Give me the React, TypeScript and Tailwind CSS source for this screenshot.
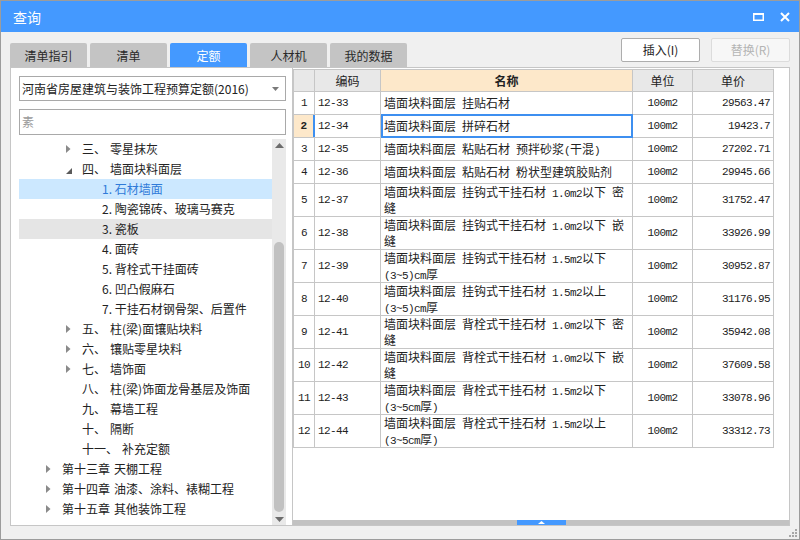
import React from 'react';

type TreeRow = {
  level: 1 | 2 | 3;
  prefix?: string;
  label: string;
  arrow?: 'closed' | 'open';
  state?: 'selected' | 'hover';
};

const treeRows: TreeRow[] = [
  { level: 2, prefix: '三、', label: '零星抹灰', arrow: 'closed' },
  { level: 2, prefix: '四、', label: '墙面块料面层', arrow: 'open' },
  { level: 3, label: '1. 石材墙面', state: 'selected' },
  { level: 3, label: '2. 陶瓷锦砖、玻璃马赛克' },
  { level: 3, label: '3. 瓷板', state: 'hover' },
  { level: 3, label: '4. 面砖' },
  { level: 3, label: '5. 背栓式干挂面砖' },
  { level: 3, label: '6. 凹凸假麻石' },
  { level: 3, label: '7. 干挂石材钢骨架、后置件' },
  { level: 2, prefix: '五、', label: '柱(梁)面镶贴块料', arrow: 'closed' },
  { level: 2, prefix: '六、', label: '镶贴零星块料', arrow: 'closed' },
  { level: 2, prefix: '七、', label: '墙饰面', arrow: 'closed' },
  { level: 2, prefix: '八、', label: '柱(梁)饰面龙骨基层及饰面' },
  { level: 2, prefix: '九、', label: '幕墙工程' },
  { level: 2, prefix: '十、', label: '隔断' },
  { level: 2, prefix: '十一、', label: '补充定额' },
  { level: 1, prefix: '第十三章', label: '天棚工程', arrow: 'closed' },
  { level: 1, prefix: '第十四章', label: '油漆、涂料、裱糊工程', arrow: 'closed' },
  { level: 1, prefix: '第十五章', label: '其他装饰工程', arrow: 'closed' },
];

interface QuotaRow {
  no: number;
  code: string;
  name: string[];
  unit: string;
  price: string;
}

const quotaRows: QuotaRow[] = [
  { no: 1, code: '12-33', name: ['墙面块料面层 挂贴石材'], unit: '100m2', price: '29563.47' },
  { no: 2, code: '12-34', name: ['墙面块料面层 拼碎石材'], unit: '100m2', price: '19423.7' },
  { no: 3, code: '12-35', name: ['墙面块料面层 粘贴石材 预拌砂浆(干混)'], unit: '100m2', price: '27202.71' },
  { no: 4, code: '12-36', name: ['墙面块料面层 粘贴石材 粉状型建筑胶贴剂'], unit: '100m2', price: '29945.66' },
  { no: 5, code: '12-37', name: ['墙面块料面层 挂钩式干挂石材 1.0m2以下 密', '缝'], unit: '100m2', price: '31752.47' },
  { no: 6, code: '12-38', name: ['墙面块料面层 挂钩式干挂石材 1.0m2以下 嵌', '缝'], unit: '100m2', price: '33926.99' },
  { no: 7, code: '12-39', name: ['墙面块料面层 挂钩式干挂石材 1.5m2以下', '(3~5)cm厚'], unit: '100m2', price: '30952.87' },
  { no: 8, code: '12-40', name: ['墙面块料面层 挂钩式干挂石材 1.5m2以上', '(3~5)cm厚'], unit: '100m2', price: '31176.95' },
  { no: 9, code: '12-41', name: ['墙面块料面层 背栓式干挂石材 1.0m2以下 密', '缝'], unit: '100m2', price: '35942.08' },
  { no: 10, code: '12-42', name: ['墙面块料面层 背栓式干挂石材 1.0m2以下 嵌', '缝'], unit: '100m2', price: '37609.58' },
  { no: 11, code: '12-43', name: ['墙面块料面层 背栓式干挂石材 1.5m2以下', '(3~5cm厚)'], unit: '100m2', price: '33078.96' },
  { no: 12, code: '12-44', name: ['墙面块料面层 背栓式干挂石材 1.5m2以上', '(3~5cm厚)'], unit: '100m2', price: '33312.73' },
];

const tabs = ['清单指引', '清单', '定额', '人材机', '我的数据'];

// ascii runs get a narrow mono face so they sit at half the width of the CJK glyphs
function Mixed({ text }: { text: string }) {
  const parts = text.split(/([\x20-\x7e]+)/).filter((p) => p !== '');
  return (
    <>
      {parts.map((p, i) =>
        /^[\x20-\x7e]+$/.test(p) ? (
          <span key={i} className="font-[family-name:'Liberation_Mono',monospace] text-[11px] tracking-[-0.6px] leading-[16px]">
            {p}
          </span>
        ) : (
          <span key={i} className="leading-[16px]">{p}</span>
        )
      )}
    </>
  );
}

function Arrow({ kind }: { kind?: 'closed' | 'open' }) {
  if (kind === 'closed') {
    return (
      <svg width="5" height="8" viewBox="0 0 5 8">
        <path d="M0 0 L4.5 4 L0 8 Z" fill="#8a8a8a" />
      </svg>
    );
  }
  if (kind === 'open') {
    return (
      <svg width="6" height="6" viewBox="0 0 6 6" className="mt-[3px]">
        <path d="M6 0 L6 6 L0 6 Z" fill="#5a5a5a" />
      </svg>
    );
  }
  return null;
}

function TreeItem({ row }: { row: TreeRow }) {
  const pad = row.level === 1 ? 'pl-[27px]' : row.level === 2 ? 'pl-[47px]' : 'pl-[83px]';
  const bg =
    row.state === 'selected' ? 'bg-[#cce8ff] text-[#2f7bd9]' : row.state === 'hover' ? 'bg-[#e5e5e5] text-[#222]' : 'text-[#222]';
  return (
    <div className={`h-[20px] flex items-center whitespace-nowrap leading-[20px] ${pad} ${bg}`}>
      {row.level !== 3 && (
        <div className="w-[16px] h-[20px] flex items-center">
          <Arrow kind={row.arrow} />
        </div>
      )}
      {row.prefix && <span>{row.prefix}</span>}
      <span className={row.prefix ? 'ml-[4px]' : ''}>{row.label}</span>
    </div>
  );
}

const cellBase = 'border-r border-r-[#c6c6c6] flex items-center whitespace-pre';
const numCell = "font-[family-name:'Liberation_Mono',monospace] text-[11px] tracking-[-0.6px]";

export default function App() {
  return (
    <div className="w-[800px] h-[540px] overflow-hidden bg-[#f0f0f0] border border-[#9c9c9c] flex flex-col font-[family-name:'Noto_Sans_CJK_SC','Noto_Sans',sans-serif] text-[12px] text-[#222]">
      {/* title bar */}
      <div className="h-[31px] bg-[#4499ff] flex items-center justify-between pl-[12px] pr-[9px] shrink-0">
        <span className="text-white text-[14px] leading-none">查询</span>
        <div className="flex items-center gap-[16px]">
          <svg width="11" height="8" viewBox="0 0 11 8">
            <rect x="0.75" y="1" width="9.5" height="6.25" fill="none" stroke="#fff" strokeWidth="1.5" />
            <rect x="0" y="0" width="11" height="2" fill="#fff" />
          </svg>
          <svg width="10" height="10" viewBox="0 0 10 10">
            <path d="M1 1 L9 9 M9 1 L1 9" stroke="#fff" strokeWidth="2" />
          </svg>
        </div>
      </div>

      {/* tabs + buttons */}
      <div className="h-[35px] flex items-start justify-between pl-[9px] pr-[9px] shrink-0">
        <div className="flex gap-[3px] mt-[11px]">
          {tabs.map((t) => (
            <div
              key={t}
              className={`w-[77px] h-[25px] rounded-t-[2px] flex items-center justify-center leading-none ${
                t === '定额' ? 'bg-[#4499ff] text-white' : 'bg-[#c4c4c4] text-[#2a2a2a]'
              }`}
            >
              {t}
            </div>
          ))}
        </div>
        <div className="flex gap-[11px] mt-[6px]">
          <div className="w-[79px] h-[24px] border border-[#adadad] bg-white rounded-[2px] flex items-center justify-center text-[#222]">
            插入(I)
          </div>
          <div className="w-[79px] h-[24px] border border-[#dcdcdc] bg-[#f7f7f7] rounded-[2px] flex items-center justify-center text-[#b4b4b4]">
            替换(R)
          </div>
        </div>
      </div>

      {/* main */}
      <div className="ml-[9px] w-[780px] h-[459px] border border-[#c6c6c6] flex shrink-0">
        {/* left panel */}
        <div className="w-[281px] bg-white flex flex-col pl-[8px] pt-[8px]">
          <div className="w-[267px] h-[25px] border border-[#a9a9a9] flex items-center justify-between pl-[2px] pr-[6px]">
            <span className="whitespace-nowrap">河南省房屋建筑与装饰工程预算定额(2016)</span>
            <svg width="7" height="4" viewBox="0 0 7 4">
              <path d="M0 0 L7 0 L3.5 4 Z" fill="#7a7a7a" />
            </svg>
          </div>
          <div className="w-[267px] h-[26px] border border-[#a9a9a9] mt-[8px] flex items-center pl-[2px] text-[#9a9a9a]">
            素
          </div>
          <div className="w-[267px] flex-1 mt-[4px] flex overflow-hidden">
            <div className="flex-1 overflow-hidden">
              {treeRows.map((r, i) => (
                <TreeItem key={i} row={r} />
              ))}
            </div>
            <div className="w-[14px] bg-[#e9e9e9] flex flex-col">
              <div className="h-[12px] flex items-center justify-center">
                <svg width="9" height="5" viewBox="0 0 9 5">
                  <path d="M0 5 L4.5 0 L9 5 Z" fill="#6c6c6c" />
                </svg>
              </div>
              <div className="flex-1 flex flex-col items-center">
                <div className="w-[10px] h-[270px] mt-[91px] rounded-full bg-[#c1c1c1]" />
              </div>
              <div className="h-[12px] flex items-center justify-center">
                <svg width="9" height="5" viewBox="0 0 9 5">
                  <path d="M0 0 L9 0 L4.5 5 Z" fill="#6c6c6c" />
                </svg>
              </div>
            </div>
          </div>
        </div>

        {/* right panel */}
        <div className="flex-1 bg-white border-l border-[#c6c6c6] flex flex-col">
          <div className="flex-1 pt-[1px]">
            <div className="w-[481px] border-l border-t border-[#c6c6c6]">
              <div className="flex h-[22px] border-b border-[#c6c6c6] bg-[#e8e8e8] text-[12px]">
                <div className={`${cellBase} w-[21px]`} />
                <div className={`${cellBase} w-[66px] justify-center`}>编码</div>
                <div className={`${cellBase} w-[252px] justify-center bg-[#fde8ca] font-bold`}>名称</div>
                <div className={`${cellBase} w-[60px] justify-center`}>单位</div>
                <div className={`${cellBase} w-[81px] justify-center`}>单价</div>
              </div>
              {quotaRows.map((r) => {
                const sel = r.no === 2;
                return (
                  <div
                    key={r.no}
                    className={`flex border-b border-[#c6c6c6] ${r.name.length > 1 ? 'h-[33px]' : 'h-[23px]'}`}
                  >
                    <div
                      className={`flex items-center justify-center w-[21px] ${numCell} ${
                        sel ? 'bg-[#fde8ca] font-bold border-r-[2px] border-r-[#3d8ff0]' : 'border-r border-r-[#c6c6c6]'
                      }`}
                    >
                      {r.no}
                    </div>
                    <div className={`${cellBase} ${numCell} w-[66px] pl-[3px]`}>{r.code}</div>
                    {sel ? (
                      <div className="w-[252px] flex items-center whitespace-pre border-[2px] border-[#3d8ff0] -mt-[1px] h-[24px] pl-[1px]">
                        <Mixed text={r.name[0]} />
                      </div>
                    ) : (
                      <div className={`${cellBase} w-[252px] pl-[3px]`}>
                        <div className="flex flex-col overflow-hidden">
                          {r.name.map((l, i) => (
                            <div key={i} className="h-[16px] leading-[16px] whitespace-pre">
                              <Mixed text={l} />
                            </div>
                          ))}
                        </div>
                      </div>
                    )}
                    <div className={`${cellBase} ${numCell} w-[60px] justify-center`}>{r.unit}</div>
                    <div className={`${cellBase} ${numCell} w-[81px] justify-end pr-[3px]`}>{r.price}</div>
                  </div>
                );
              })}
            </div>
          </div>
          <div className="h-[5px] bg-[#c2c2c2] flex justify-center shrink-0">
            <div className="w-[49px] h-[5px] bg-[#4499ff] flex items-center justify-center">
              <svg width="7" height="3" viewBox="0 0 7 3">
                <path d="M0 3 L3.5 0 L7 3 Z" fill="#fff" />
              </svg>
            </div>
          </div>
        </div>
      </div>

      {/* resize grip */}
      <div className="flex-1 flex justify-end items-end pr-[2px] pb-[2px]">
        <svg width="8" height="8" viewBox="0 0 8 8">
          <rect x="6" y="0" width="2" height="2" fill="#a8a8a8" />
          <rect x="3" y="3" width="2" height="2" fill="#a8a8a8" />
          <rect x="6" y="3" width="2" height="2" fill="#a8a8a8" />
          <rect x="0" y="6" width="2" height="2" fill="#a8a8a8" />
          <rect x="3" y="6" width="2" height="2" fill="#a8a8a8" />
          <rect x="6" y="6" width="2" height="2" fill="#a8a8a8" />
        </svg>
      </div>
    </div>
  );
}
